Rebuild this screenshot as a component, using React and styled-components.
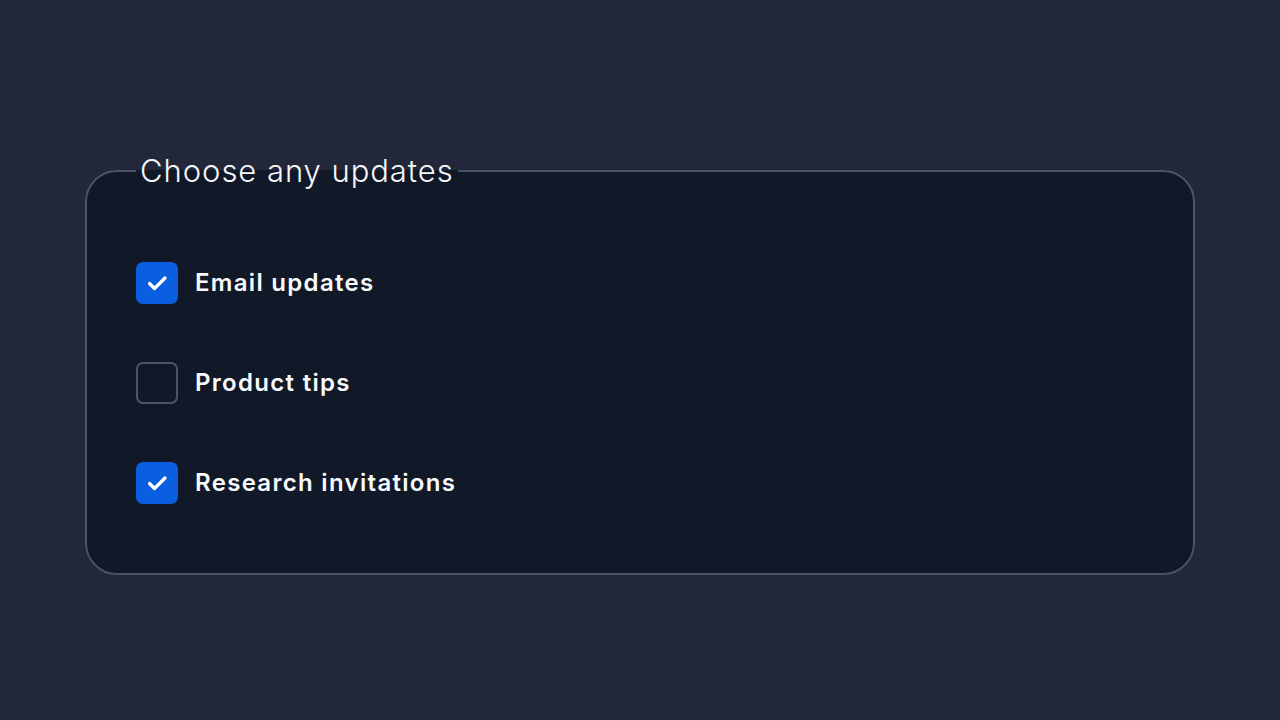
import React, { useState } from 'react';
import styled, { createGlobalStyle } from 'styled-components';

const GlobalStyle = createGlobalStyle`
  html, body {
    margin: 0;
    padding: 0;
    background: #222839;
    font-family: Inter, "Noto Sans", sans-serif;
  }
`;

const Page = styled.div`
  width: 100vw;
  height: 100vh;
  display: flex;
  align-items: center;
  justify-content: center;
  box-sizing: border-box;
  padding-top: 5px;
`;

const Fieldset = styled.fieldset`
  width: 1110px;
  box-sizing: border-box;
  margin: 0;
  padding: 71px 49px 69px;
  border: 2px solid #475569;
  border-radius: 32px;
  background: #111827;
  display: flex;
  flex-direction: column;
  gap: 58px;
`;

const Legend = styled.legend`
  padding: 0 4px;
  color: #f5f7fb;
  font-size: 31px;
  font-weight: 300;
  line-height: 40px;
  letter-spacing: 0.95px;
`;

const Row = styled.label`
  display: flex;
  align-items: center;
  gap: 17px;
  cursor: pointer;
`;

const Box = styled.span`
  width: 42px;
  height: 42px;
  box-sizing: border-box;
  border-radius: 7px;
  display: flex;
  align-items: center;
  justify-content: center;
  background: ${p => (p.$checked ? '#0a5fe0' : 'transparent')};
  border: 2px solid ${p => (p.$checked ? '#0a5fe0' : '#4b5568')};
`;

const Label = styled.span`
  color: #f8fafc;
  font-size: 24px;
  font-weight: 600;
  letter-spacing: 1.3px;
`;

const Check = () => (
  <svg width="24" height="24" viewBox="0 0 24 24" fill="none" stroke="#fff" strokeWidth="3.2" strokeLinecap="round" strokeLinejoin="round">
    <path d="M4.5 12.5l5 5L20 7" />
  </svg>
);

const items = [
  { label: 'Email updates', checked: true },
  { label: 'Product tips', checked: false },
  { label: 'Research invitations', checked: true },
];

export default function App() {
  const [state, setState] = useState(items.map(i => i.checked));
  return (
    <Page>
      <GlobalStyle />
      <Fieldset>
        <Legend>Choose any updates</Legend>
        {items.map((it, i) => (
          <Row key={it.label} onClick={() => setState(s => s.map((v, j) => (j === i ? !v : v)))}>
            <Box $checked={state[i]}>{state[i] && <Check />}</Box>
            <Label>{it.label}</Label>
          </Row>
        ))}
      </Fieldset>
    </Page>
  );
}
